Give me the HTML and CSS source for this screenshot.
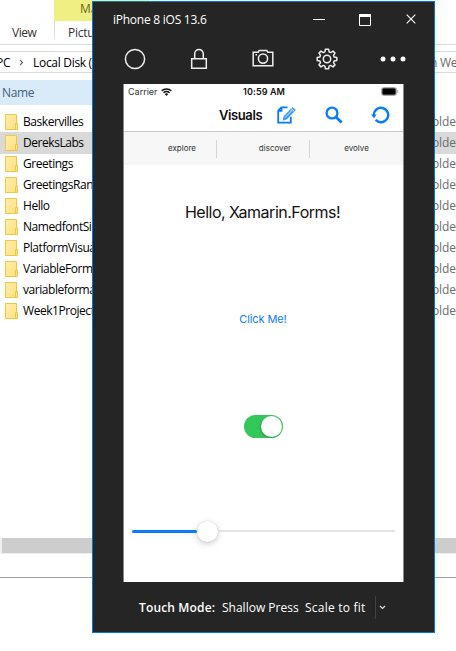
FILE: index.html
```html
<!DOCTYPE html>
<html lang="en">
<head>
<meta charset="utf-8">
<title>Visuals</title>
<link rel="stylesheet" href="styles.css">
</head>
<body>
<svg class="defs" width="0" height="0"><defs>
<linearGradient id="fold" x1="0" y1="0" x2="1" y2="1"><stop offset="0" stop-color="#ffeda8"/><stop offset="1" stop-color="#ffe080"/></linearGradient>
<symbol id="folder" viewBox="0 0 13 16"><path d="M.5.5h11v8.8h1v6.2H.5z" fill="url(#fold)" stroke="#edc64c"/><path d="M10.5 15V9.5h2" fill="none" stroke="#edc64c"/></symbol>
</defs></svg>
<main class="explorer">
  <header class="ribbon">
    <div class="view">View</div>
    <div class="tools"><div class="manage">Ma</div><div class="picture">Pictu</div></div>
  </header>
  <div class="address"><span class="crumb">PC</span><svg class="chev" width="5" height="7" viewBox="0 0 5 7"><path d="M1 .8 3.5 3.5 1 6.2" fill="none" stroke="#666" stroke-width="1.2"/></svg><span class="disk">Local Disk (</span><span class="search">h We</span></div>
  <div class="heading">Name</div>
  <ul class="files">
    <li><svg><use href="#folder"/></svg><span class="name">Baskervilles</span><span class="type">older</span></li>
    <li class="selected"><svg><use href="#folder"/></svg><span class="name">DereksLabs</span><span class="type">older</span></li>
    <li><svg><use href="#folder"/></svg><span class="name">Greetings</span><span class="type">older</span></li>
    <li><svg><use href="#folder"/></svg><span class="name">GreetingsRan</span><span class="type">older</span></li>
    <li><svg><use href="#folder"/></svg><span class="name">Hello</span><span class="type">older</span></li>
    <li><svg><use href="#folder"/></svg><span class="name">NamedfontSi</span><span class="type">older</span></li>
    <li><svg><use href="#folder"/></svg><span class="name">PlatformVisua</span><span class="type">older</span></li>
    <li><svg><use href="#folder"/></svg><span class="name">VariableForm</span><span class="type">older</span></li>
    <li><svg><use href="#folder"/></svg><span class="name">variableforma</span><span class="type">older</span></li>
    <li><svg><use href="#folder"/></svg><span class="name">Week1Project</span><span class="type">older</span></li>
  </ul>
  <div class="scrollbar"><div class="thumb"></div></div>
  <div class="status-line"></div>
</main>

<section class="simulator">
  <header class="titlebar">
    <span class="title">iPhone 8 iOS 13.6</span>
    <svg width="104" height="14" viewBox="0 0 104 14" fill="none" stroke="#fff"><path d="M0 7.5h12"/><path d="M46.5 3v10.5h11V3" stroke-width="1"/><path d="M46 3.5h12" stroke-width="3"/><path d="m93.7 2.7 8.6 8.6m0-8.6-8.6 8.6" stroke-width="1.1"/></svg>
  </header>
  <div class="toolbar">
    <svg width="22" height="22" viewBox="0 0 22 22"><circle cx="11" cy="11" r="9.6"/></svg>
    <svg width="22" height="22" viewBox="0 0 22 22"><path d="M3.7 10.7h14.6v9.6H3.7zM6.7 10V5.8a4.3 4.3 0 0 1 8.6 0V10"/></svg>
    <svg width="22" height="22" viewBox="0 0 22 22"><path d="M1.2 4.2h5l1-1.8h7.6l1 1.8h5v13.6H1.2z"/><circle cx="11" cy="10.6" r="4.6"/><path d="M3.5 6.8h1.5"/></svg>
    <svg width="22" height="22" viewBox="0 0 22 22" stroke-linejoin="round"><path d="M9.4 1.2h3.2l.5 2.7 1.6.7L17 3.1 19 5.1l-1.5 2.2.6 1.6 2.7.5v3.2l-2.7.5-.6 1.6 1.5 2.2-2 2-2.3-1.5-1.6.7-.5 2.7H9.4l-.5-2.7-1.6-.7L5 18.9l-2-2 1.5-2.2-.6-1.6-2.7-.5V9.4l2.7-.5.6-1.6L3 5.1l2-2 2.3 1.5 1.6-.7z"/><circle cx="11" cy="11" r="3.7"/></svg>
    <svg class="more" width="26" height="22" viewBox="0 0 26 22"><circle cx="3" cy="11" r="2.5"/><circle cx="13" cy="11" r="2.5"/><circle cx="23" cy="11" r="2.5"/></svg>
  </div>
  <div class="phone">
    <div class="status">
      <span class="carrier">Carrier <svg width="11" height="8" viewBox="0 0 11 8"><path d="M.7 2.8a7 7 0 0 1 9.6 0M2.5 4.8a4.4 4.4 0 0 1 6 0" fill="none" stroke="#111" stroke-width="1.5"/><path d="M3.8 6.1a2.5 2.5 0 0 1 3.4 0L5.5 8z" fill="#111"/></svg></span>
      <span class="clock">10:59 AM</span>
      <svg class="battery" width="18" height="9" viewBox="0 0 18 9"><rect x=".5" y=".5" width="15" height="8" rx="2.3" fill="none" stroke="#aaa"/><rect x="1.3" y="1.3" width="13.4" height="6.4" rx="1.3"/><path d="M16.8 3v3" stroke="#aaa"/></svg>
    </div>
    <div class="nav">
      <span class="nav-title">Visuals</span>
      <svg class="compose" width="20" height="18" viewBox="0 0 20 18"><path d="M10.5 1.3H4.3L1.2 4.5v12.2h12.6v-6M1.2 4.8h3.3V1.3" fill="none" stroke="#087cff" stroke-width="1.8"/><path d="M15.6 1.1 18.8 4l-8.9 9.2-4.3 1.5 1.1-4.4z" fill="#3c97f5"/><path d="m8 11.6 7.8-8M14 2.4l3.4 3.2" stroke="#fff" stroke-width=".8"/></svg>
      <svg class="find" width="18" height="18" viewBox="0 0 18 18"><circle cx="7" cy="7" r="5.4" fill="none" stroke="#087cff" stroke-width="2.3"/><path d="m11 11 5.6 5.6" stroke="#087cff" stroke-width="2.8"/></svg>
      <svg class="reload" width="19" height="18" viewBox="0 0 19 18"><path d="M2.8 9.5A7.2 7.2 0 1 1 4.6 13.8" fill="none" stroke="#087cff" stroke-width="2.4"/><path d="M0 8.6h5.6l-2.6 3.6z" fill="#087cff"/></svg>
    </div>
    <div class="tabs"><span>explore</span><span>discover</span><span>evolve</span></div>
    <div class="content">
      <div class="hello">Hello, Xamarin.Forms!</div>
      <div class="click">Click Me!</div>
      <div class="switch"><div class="switch-knob"></div></div>
      <div class="slider"><div class="filled"></div><div class="slider-knob"></div><div class="remain"></div></div>
    </div>
  </div>
  <footer class="touch"><b>Touch Mode:</b><span class="press">Shallow Press</span><span class="scale">Scale to fit</span><i></i><svg width="7" height="5" viewBox="0 0 7 5"><path d="m1 1 2.5 2.5L6 1" fill="none" stroke="#ddd" stroke-width="1.2"/></svg></footer>
</section>
</body>
</html>
```
FILE: styles.css
```css
* { box-sizing: border-box; }
body { margin: 0; width: 456px; height: 651px; overflow: hidden; background: #fff; font: 12px "Open Sans", sans-serif; color: #000; }
svg { display: block; flex: none; }
.defs { position: absolute; }
.explorer { height: 651px; overflow: hidden; white-space: nowrap; }
.ribbon { display: flex; height: 45px; border-bottom: 1px solid #dadbdc; color: #333; }
.view { width: 54px; padding: 24px 0 0 12px; line-height: 18px; letter-spacing: -.45px; }
.manage { width: 95px; height: 21px; padding-left: 26px; line-height: 17px; background: #f0ef83; color: #6c6720; }
.picture { height: 18px; padding-left: 13px; line-height: 24px; border-left: 1px solid #ddd; letter-spacing: -.25px; }
.address { display: flex; align-items: center; height: 22px; margin-top: 6px; border: solid #d9d9d9; border-width: 1px 0; letter-spacing: -.3px; }
.crumb { width: 19px; margin-left: -4px; }
.chev { margin-left: 4px; }
.disk { width: 100px; margin-left: 9px; }
.search { margin-left: auto; width: 26px; color: #6d6d6d; }
.heading { width: 100px; height: 25px; margin-top: 7px; padding-left: 2px; line-height: 25px; background: #d9ebf9; color: #44607f; letter-spacing: -.35px; }
.files { margin: 6px 0 0; padding: 0; list-style: none; }
.files li { display: flex; align-items: center; height: 21px; padding-left: 5px; }
.files .selected { background: #d9d9d9; box-shadow: 0 1px #d9d9d9; }
.files svg { width: 13px; height: 16px; }
.name { width: 120px; margin-left: 5px; letter-spacing: -.45px; }
.type { width: 24px; margin-left: auto; color: #6d6d6d; letter-spacing: -.1px; }
.scrollbar { height: 16px; margin-top: 217px; padding: 0 0 1px 2px; background: #f0f0f0; }
.thumb { height: 15px; background: #cdcdcd; }
.status-line { height: 1px; margin-top: 23px; background: #a0a0a0; }

.simulator { position: absolute; left: 92px; top: 1px; width: 343px; height: 632px; border: 1px solid #0078d7; background: #252525; color: #fff; white-space: nowrap; }
.titlebar { display: flex; align-items: center; justify-content: space-between; height: 34px; padding: 0 17px 0 20px; }
.title { letter-spacing: -.25px; }
.toolbar { display: flex; justify-content: space-between; height: 48px; padding: 12px 28.5px 0 30.5px; fill: none; stroke: #eee; stroke-width: 1.5; }
.more { fill: #fff; stroke: none; }
.phone { width: 281px; height: 498px; margin-left: 30px; background: #fff; border: solid #888; border-width: 0 1px; color: #111; font-family: Inter, sans-serif; }
.status { display: grid; grid-template-columns: 113px 1fr auto; align-items: center; height: 15px; padding: 0 4px; font-size: 9px; }
.carrier { display: flex; align-items: center; gap: 3px; color: #333; }
.clock { padding-left: 2px; font-weight: 600; letter-spacing: .1px; }
.nav { display: flex; align-items: center; height: 33px; padding-left: 95px; border-bottom: 1px solid #c9c9c9; }
.nav-title { width: 58px; font-size: 13px; font-weight: 600; letter-spacing: -.4px; }
.find { margin-left: 28px; }
.reload { margin-left: 28px; }
.tabs { display: grid; grid-template-columns: 93px 93px 93px; align-items: center; height: 33px; background: #f7f7f7; font-size: 8px; text-align: center; }
.tabs span { height: 18px; padding-left: 24px; line-height: 17px; border-right: 1px solid #d5d5d5; color: #333; }
.tabs span:last-child { padding-left: 0; border: 0; }
.content { display: flex; flex-direction: column; align-items: center; }
.hello { margin-top: 37px; margin-right: 2px; font-size: 16px; line-height: 20px; letter-spacing: -.5px; }
.click { margin-top: 88px; margin-right: 1px; color: #087cff; font-size: 11px; line-height: 18px; letter-spacing: -.1px; }
.switch { width: 39px; height: 23px; margin-top: 87px; padding: 1px; border-radius: 12px; background: #34c759; }
.switch-knob { width: 21px; height: 21px; margin-left: auto; border-radius: 50%; background: #fff; box-shadow: -1px 1px 2px #0003; }
.slider { display: flex; align-items: center; width: 263px; height: 22px; margin-top: 82px; }
.filled { width: 65px; height: 3px; border-radius: 2px; background: #087cff; }
.slider-knob { width: 21px; height: 21px; border-radius: 50%; background: #fff; box-shadow: 0 2px 6px #0003, 0 0 1px #0003; }
.remain { flex: 1; height: 2px; background: #e4e4e4; }
.touch { display: flex; align-items: center; height: 50px; padding-left: 46px; }
.touch b { width: 83px; font-weight: 600; letter-spacing: .15px; }
.press { width: 83px; }
.scale { width: 70px; letter-spacing: .22px; }
.touch i { width: 1px; height: 23px; margin-right: 3px; background: #414141; }
```
